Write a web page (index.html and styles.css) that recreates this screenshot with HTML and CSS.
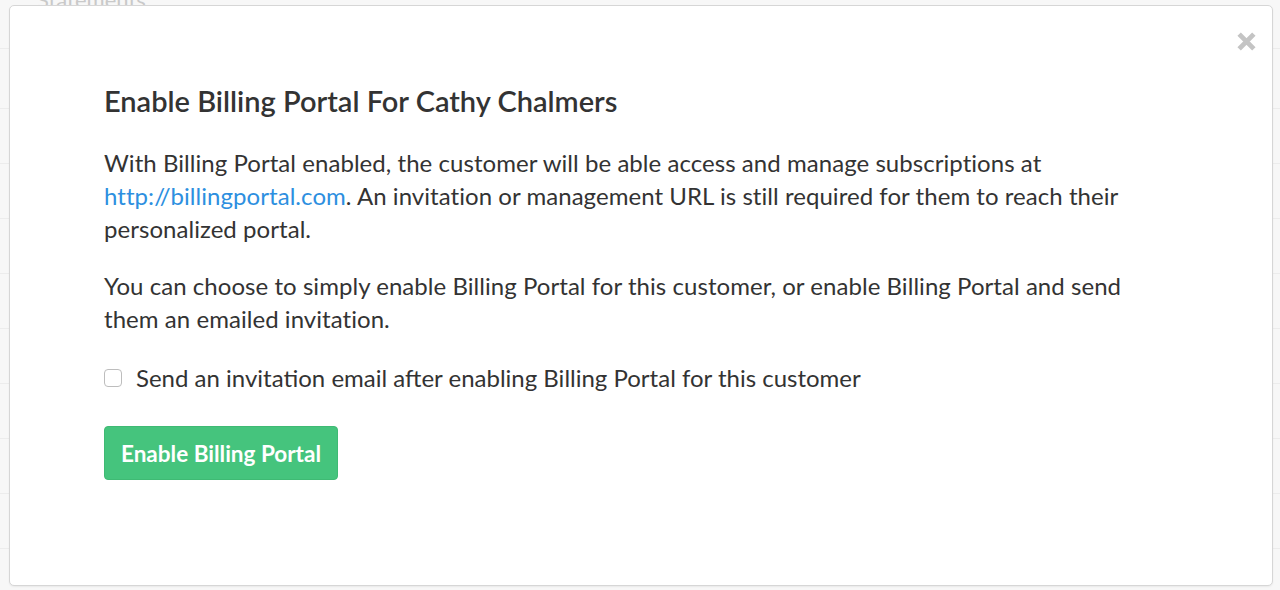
FILE: index.html
```html
<!DOCTYPE html>
<html lang="en">
<head>
<meta charset="utf-8">
<title>Enable Billing Portal</title>
<link rel="stylesheet" href="styles.css">
</head>
<body>
<div class="page">
  <div class="page-title">Statements</div>
  <div class="rows">
    <div class="row"></div><div class="row"></div><div class="row"></div><div class="row"></div>
    <div class="row"></div><div class="row"></div><div class="row"></div><div class="row"></div>
    <div class="row"></div><div class="row"></div>
  </div>
</div>
<div class="modal">
  <button class="close" aria-label="Close">
    <svg width="21" height="21" viewBox="0 0 20 20"><path d="M3 3 L17 17 M17 3 L3 17" stroke="#c4c4c4" stroke-width="4.6" stroke-linecap="butt"/></svg>
  </button>
  <div class="modal-body">
    <h2 class="title">Enable Billing Portal For Cathy Chalmers</h2>
    <p class="text">With Billing Portal enabled, the customer will be able access and manage subscriptions at <a href="#" class="link">http://billingportal.com</a>. An invitation or management URL is still required for them to reach their personalized portal.</p>
    <p class="text">You can choose to simply enable Billing Portal for this customer, or enable Billing Portal and send them an emailed invitation.</p>
    <label class="check"><span class="box"></span>Send an invitation email after enabling Billing Portal for this customer</label>
    <button class="btn">Enable Billing Portal</button>
  </div>
</div>
</body>
</html>
```
FILE: styles.css
```css
html, body {
  margin: 0;
  padding: 0;
}
body {
  background: #f7f7f7;
  font-family: Lato, "Open Sans", sans-serif;
  color: #333;
  width: 1280px;
  height: 590px;
  overflow: hidden;
  position: relative;
}
.page-title {
  font-size: 22px;
  color: #c9c9c9;
  padding-left: 37px;
  margin-top: -12px;
  line-height: 24px;
}
.rows {
  margin-top: 36px;
}
.row {
  height: 55px;
  border-top: 1px solid #ececec;
  box-sizing: border-box;
}
.row:first-child {
  height: 60px;
}
.modal {
  position: absolute;
  left: 9px;
  top: 5px;
  width: 1264px;
  height: 581px;
  box-sizing: border-box;
  background: #fff;
  border: 1px solid #d6d6d6;
  border-radius: 5px;
  box-shadow: 0 1px 2px rgba(0,0,0,0.06);
}
.close {
  position: absolute;
  top: 25px;
  right: 15px;
  border: 0;
  background: none;
  padding: 0;
  width: 21px;
  height: 21px;
  cursor: pointer;
}
.close svg {
  display: block;
}
.modal-body {
  padding: 78px 94px 0;
}
.title {
  margin: 0;
  font-size: 29px;
  line-height: 34px;
  font-weight: 600;
  color: #333;
}
.text {
  margin: 28px 0 0;
  font-size: 24px;
  line-height: 33px;
  color: #333;
  max-width: 1040px;
  letter-spacing: 0.05px;
}
.text + .text {
  margin-top: 24px;
}
.link {
  color: #2d8fe0;
  text-decoration: none;
}
.check {
  display: flex;
  align-items: center;
  gap: 14px;
  margin-top: 26px;
  font-size: 24px;
  line-height: 33px;
  color: #333;
}
.box {
  width: 18px;
  height: 18px;
  box-sizing: border-box;
  border: 1px solid #bdbdbd;
  border-radius: 4px;
  background: #fff;
  flex: none;
}
.btn {
  display: block;
  margin-top: 32px;
  width: 234px;
  height: 54px;
  background: #45c47d;
  border: 1px solid #3fba74;
  border-radius: 4px;
  color: #fff;
  font-family: Lato, "Open Sans", sans-serif;
  font-weight: 700;
  font-size: 22.5px;
  padding: 0;
  cursor: pointer;
}
```
